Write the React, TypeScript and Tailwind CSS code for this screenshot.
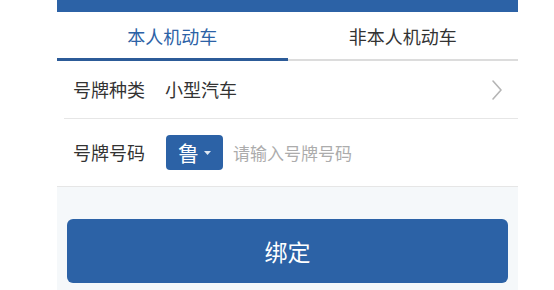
import React from 'react';

const font = { fontFamily: '"Noto Sans CJK SC", "Noto Sans", sans-serif' };

const Chevron = () => (
  <svg width="12" height="22" viewBox="0 0 12 22" fill="none">
    <path d="M2 2l8 9-8 9" stroke="#b5b5b5" strokeWidth="1.6" strokeLinecap="round" strokeLinejoin="round" />
  </svg>
);

export default function App() {
  return (
    <div className="w-[554px] h-[290px] bg-white overflow-hidden" style={font}>
      <div className="ml-[57px] w-[461px] h-full flex flex-col">
        <div className="h-[12px] bg-[#2c62a6]" />
        <div className="flex h-[49px]">
          <div className="flex-1 flex flex-col">
            <div className="flex-1 flex items-center justify-center text-[18px] text-[#2c62a6] pt-[3px]">本人机动车</div>
            <div className="h-[3px] bg-[#2c5b98]" />
          </div>
          <div className="flex-1 flex flex-col">
            <div className="flex-1 flex items-center justify-center text-[18px] text-[#333] pt-[3px]">非本人机动车</div>
            <div className="h-[3px] flex flex-col justify-end"><div className="h-[2px] bg-[#dcdcdc]" /></div>
          </div>
        </div>
        <div className="pl-[7px]">
          <div className="h-[58px] flex items-center border-b border-[#e6e6e6] pl-[9px] pr-[15px] text-[18px] text-[#333]">
            <span className="w-[92px]">号牌种类</span>
            <span className="flex-1">小型汽车</span>
            <Chevron />
          </div>
        </div>
        <div className="h-[68px] flex items-center border-b border-[#e6e6e6] pl-[16px] text-[18px] text-[#333]">
          <span className="w-[93px]">号牌号码</span>
          <div className="h-[35px] w-[57px] rounded-[4px] bg-[#2c62a6] flex items-center justify-center gap-[5px] text-white text-[21px]">
            <span className="leading-none">鲁</span>
            <svg width="7" height="4" viewBox="0 0 7 4"><path d="M0 0h7L3.5 4z" fill="#dfe8f3" /></svg>
          </div>
          <span className="ml-[10px] text-[#acacac] text-[17px]">请输入号牌号码</span>
        </div>
        <div className="flex-1 bg-[#f5f8fa] px-[10px] pt-[32px]">
          <button className="w-full h-[64px] rounded-[6px] bg-[#2c62a6] text-white text-[23px]">绑定</button>
        </div>
      </div>
    </div>
  );
}
